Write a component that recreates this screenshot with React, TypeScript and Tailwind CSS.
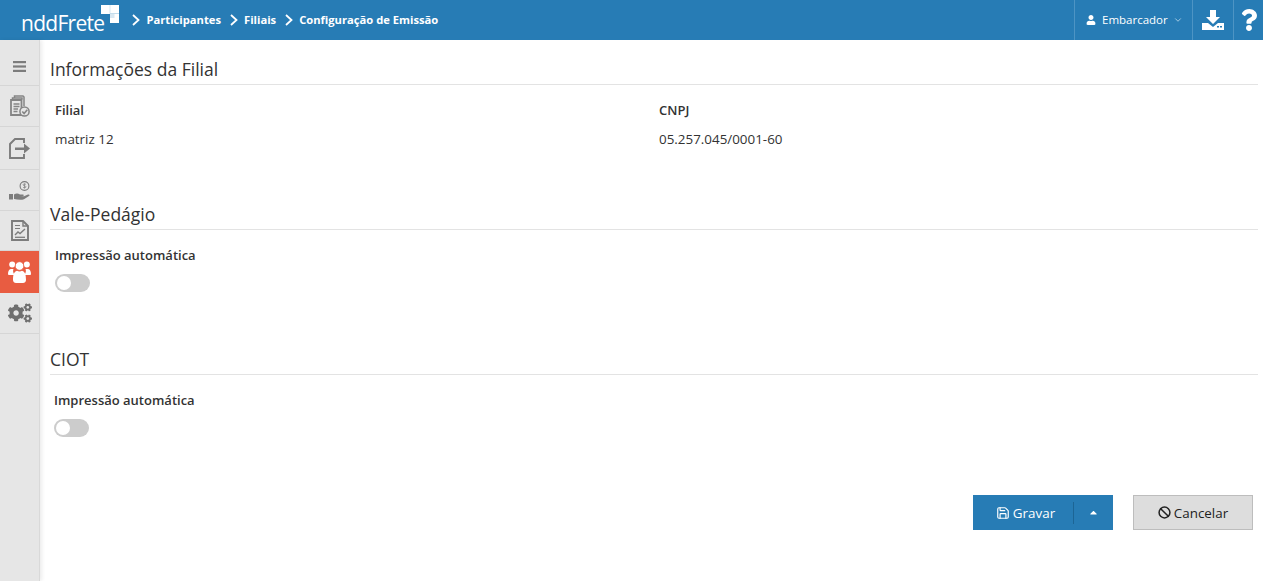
import React from 'react';
import { ChevronDown, Ban, Save } from 'lucide-react';
import { FaUser, FaCogs, FaQuestion, FaCaretUp } from 'react-icons/fa';

function BarsIcon() {
  return (
    <svg width="13" height="11" viewBox="0 0 13 11" fill="#7c7c7c">
      <rect width="13" height="2.2" y="0" />
      <rect width="13" height="2.2" y="4.4" />
      <rect width="13" height="2.2" y="8.8" />
    </svg>
  );
}

function DocCheckIcon() {
  return (
    <svg width="20" height="23" viewBox="0 0 20 23" fill="none" stroke="#858585" strokeWidth="1.5">
      <path d="M4.5 3V1h8.5l1 1v9" />
      <path d="M2.5 4.5V3h9.5v1.5" />
      <path d="M1 5h10.5v15H1z" fill="#e6e6e6" strokeWidth="1.8" />
      <path d="M3.5 9h6M3.5 11.5h6M3.5 14h4.5M3.5 16.5h4" strokeWidth="1.4" />
      <circle cx="14.5" cy="16.5" r="4.6" fill="#e6e6e6" />
      <path d="M12.3 16.5l1.8 2 3.2-3.8" strokeWidth="1.6" />
    </svg>
  );
}

function ExportIcon() {
  return (
    <svg width="21" height="21" viewBox="0 0 21 21" fill="none">
      <path d="M15 5V1H6L1 6v14h14v-4" stroke="#7c7c7c" strokeWidth="1.9" />
      <path d="M6 9.5h9V5.5l6 5-6 5v-3.6H6z" fill="#7c7c7c" />
    </svg>
  );
}

function HandCoinIcon() {
  return (
    <svg width="22" height="19" viewBox="0 0 22 19" fill="none">
      <circle cx="15.5" cy="5" r="4.4" stroke="#7c7c7c" strokeWidth="1.1" />
      <path d="M15.5 2.5v5M14 6.3c1 .8 3 .6 3-.5s-3-.8-3-2c0-1 2-1.1 3-.4" stroke="#7c7c7c" strokeWidth="0.7" />
      <path d="M0 13h4v5.5H0z" fill="#7c7c7c" />
      <path d="M5 13.5c2-1.5 4-1.5 6 0h3c1 0 1 1.5 0 1.5h-3l4 .3 4-1.8c1.5-.4 2 .8 1 1.5l-5 3.2c-3 1-7 .3-10-.2z" fill="#7c7c7c" />
    </svg>
  );
}

function ReportIcon() {
  return (
    <svg width="18" height="21" viewBox="0 0 18 21" fill="none" stroke="#7c7c7c">
      <path d="M1 1h11l5 5v14H1z" strokeWidth="1.9" />
      <path d="M12 1v5h5" strokeWidth="1.4" />
      <path d="M4 5.5h5M4 8.5h5" strokeWidth="1.2" />
      <path d="M4 15l3-3 2 1.5 5-4.5" strokeWidth="1.4" />
      <path d="M4 17.3h10" strokeWidth="1.3" />
    </svg>
  );
}

function UsersIcon() {
  return (
    <svg width="23" height="22" viewBox="0 0 23 22" fill="white">
      <circle cx="4.2" cy="3.6" r="3" />
      <circle cx="18.8" cy="3.6" r="3" />
      <path d="M0 13c0-3 1-5 3.5-5h2c-.6 1.2-.6 3 .5 5v1H1.5C.5 14 0 13.6 0 13z" />
      <path d="M23 13c0-3-1-5-3.5-5h-2c.6 1.2.6 3-.5 5v1h4.500c1 0 1.500-.4 1.500-1z" />
      <circle cx="11.5" cy="5" r="4.300" stroke="#e85c41" strokeWidth="0.8" />
      <path d="M5 19c0-5 1-8.500 4-9.300 1.500.9 3.500.9 5 0 3 .8 4 4.300 4 9.300 0 2-1.500 3-3 3H8c-1.500 0-3-1-3-3z" />
    </svg>
  );
}

function DownloadIcon() {
  return (
    <svg width="22" height="20" viewBox="0 0 22 20" fill="white">
      <path d="M8 0h6v7h4l-7 7-7-7h4z" />
      <path d="M0 13h6l5 4 5-4h6v7H0z" />
      <rect x="15" y="16" width="2" height="1.500" fill="#277cb5" />
      <rect x="18" y="16" width="2" height="1.500" fill="#277cb5" />
    </svg>
  );
}

function LogoMark() {
  return (
    <svg width="18" height="18" viewBox="0 0 18 18" className="mb-[12px] ml-[-3px] shrink-0">
      <rect x="0" y="0" width="9" height="9" fill="white" />
      <rect x="9" y="0" width="9" height="8.500" fill="white" />
      <rect x="9" y="8.500" width="9" height="9.500" fill="white" />
      <rect x="9" y="8.500" width="4.500" height="4.500" fill="#d9e8f2" />
      <path d="M9 0v9M9 8.500h9" stroke="#bcd8ea" strokeWidth="0.6" />
    </svg>
  );
}

function CrumbArrow() {
  return (
    <svg width="8" height="12" viewBox="0 0 8 12" fill="none" stroke="white" strokeWidth="1.800">
      <path d="M1 1l5.500 5L1 11" />
    </svg>
  );
}

function SideItem({ children, active, height }: { children: React.ReactNode; active?: boolean; height: string }) {
  return (
    <div className={`flex w-full items-center justify-center border-b ${height} ${active ? 'border-[#e85c41] bg-[#e85c41]' : 'border-[#d6d6d6]'}`}>
      {children}
    </div>
  );
}

function Crumb({ label }: { label: string }) {
  return (
    <div className="flex items-center gap-[6px]">
      <CrumbArrow />
      <span className="text-[11.2px] font-bold text-white">{label}</span>
    </div>
  );
}

function SectionTitle({ label }: { label: string }) {
  return (
    <div className="h-[31px] border-b border-[#e3e3e3] pt-[2px]">
      <h2 className="text-[17.5px] leading-[26px] font-medium text-[#333]">{label}</h2>
    </div>
  );
}

function Toggle() {
  return (
    <div className="mt-[8px] flex h-[18px] w-[35px] items-center rounded-full bg-[#cccccc] pl-[2px]">
      <div className="h-[14px] w-[14px] rounded-full bg-white" />
    </div>
  );
}

export default function App() {
  return (
    <div className="flex h-[581px] w-[1263px] flex-col overflow-hidden bg-white font-['Open_Sans',sans-serif] text-[13px] text-[#333]">
      <header className="flex h-10 shrink-0 items-center bg-[#277cb5]">
        <div className="flex items-end pl-[21px]">
          <span className="pt-[6px] text-[21px] leading-[24px] font-normal tracking-[-0.7px] text-white">nddFrete</span>
          <LogoMark />
        </div>
        <div className="ml-[13px] flex items-center gap-[9px]">
          <Crumb label="Participantes" />
          <Crumb label="Filiais" />
          <Crumb label="Configuração de Emissão" />
        </div>
        <div className="ml-auto flex h-full">
          <div className="flex w-[118px] items-center border-l border-[#4d94c4] pl-[11px]">
            <FaUser size={10} className="text-white" />
            <span className="ml-[6px] text-[11.5px] text-white">Embarcador</span>
            <ChevronDown size={10} className="ml-[5px] text-[#bcd8ea]" />
          </div>
          <div className="flex w-[41px] items-center justify-center border-l border-[#4d94c4]">
            <DownloadIcon />
          </div>
          <div className="flex w-[30px] items-center justify-center border-l border-[#4d94c4]">
            <FaQuestion size={22} className="text-white" />
          </div>
        </div>
      </header>
      <div className="flex flex-1">
        <aside className="w-10 shrink-0 border-r border-[#d9d9d9] bg-[#e6e6e6] shadow-[2px_0_4px_rgba(0,0,0,0.08)]">
          <SideItem height="h-[46px]"><div className="mt-[8px] flex"><BarsIcon /></div></SideItem>
          <SideItem height="h-[41px]"><DocCheckIcon /></SideItem>
          <SideItem height="h-[43px]"><ExportIcon /></SideItem>
          <SideItem height="h-[41px]"><HandCoinIcon /></SideItem>
          <SideItem height="h-[40px]"><ReportIcon /></SideItem>
          <SideItem height="h-[42px]" active><UsersIcon /></SideItem>
          <SideItem height="h-[41px]"><FaCogs size={24} className="text-[#6f6f6f]" /></SideItem>
        </aside>
        <main className="flex-1 pt-[14px] pr-[5px] pl-[10px]">
          <section className="h-[145px]">
            <SectionTitle label="Informações da Filial" />
            <div className="mt-[16px] grid grid-cols-[604px_1fr] pl-[5px]">
              <span className="font-semibold">Filial</span>
              <span className="font-semibold">CNPJ</span>
              <span className="mt-[8px] text-[13.4px]">matriz 12</span>
              <span className="mt-[8px] text-[13.4px]">05.257.045/0001-60</span>
            </div>
          </section>
          <section className="h-[145px]">
            <SectionTitle label="Vale-Pedágio" />
            <div className="mt-[16px] pl-[5px]">
              <span className="font-semibold">Impressão automática</span>
              <Toggle />
            </div>
          </section>
          <section className="h-[151px]">
            <SectionTitle label="CIOT" />
            <div className="mt-[16px] pl-[4px]">
              <span className="font-semibold">Impressão automática</span>
              <Toggle />
            </div>
          </section>
          <div className="flex justify-end gap-5 pr-[5px] text-[13.4px]">
            <button className="flex h-[35px] w-[140px] items-center bg-[#277cb5] text-white">
              <span className="flex w-[101px] items-center justify-center gap-[3px] border-r border-[#1c6595] pl-[5px] leading-[21px]">
                <Save size={14} />
                <span className="pt-[1px]">Gravar</span>
              </span>
              <span className="flex flex-1 items-center justify-center">
                <FaCaretUp size={11} />
              </span>
            </button>
            <button className="flex h-[35px] w-[120px] items-center justify-center gap-[3px] border border-[#bdbdbd] bg-[#dddddd] text-[#222]">
              <Ban size={13} strokeWidth={2.800} />
              <span className="pt-[1px]">Cancelar</span>
            </button>
          </div>
        </main>
      </div>
    </div>
  );
}
